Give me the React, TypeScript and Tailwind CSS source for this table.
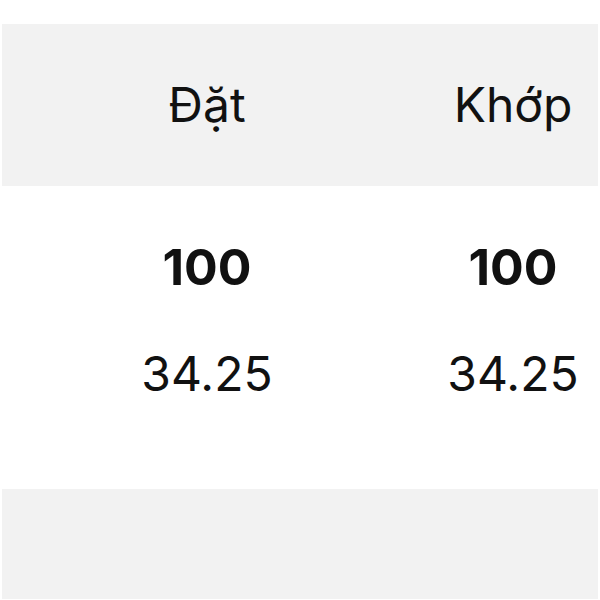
import React from 'react';

/* ---------- Veri ------------------------------------------------- */
const columns = [
  { label: 'Đặt', qty: '100', price: '34.25' },
  { label: 'Khớp', qty: '100', price: '34.25' },
];

/* ---------- Bileşen --------------------------------------------- */
export default function App() {
  return (
    <main
      className="w-[600px] h-[600px] bg-white overflow-hidden text-[#111]"
      style={{ fontFamily: 'Inter, "Noto Sans", sans-serif' }}
    >
      {/* Başlık satırı */}
      <div className="pt-[24px]">
        <div className="mx-[2px] h-[162px] bg-[#f2f2f2] flex items-center">
          <div className="w-[52px] shrink-0" />
          {columns.map(c => (
            <div key={c.label} className="w-[306px] shrink-0 text-center text-[48px] leading-[58px]">
              {c.label}
            </div>
          ))}
        </div>
      </div>

      {/* Değer satırı */}
      <div className="h-[303px] flex pt-[52px]">
        <div className="w-[54px] shrink-0" />
        {columns.map(c => (
          <div key={c.label} className="w-[306px] shrink-0 flex flex-col items-center">
            <span className="text-[50px] font-bold leading-[58px]">{c.qty}</span>
            <span className="mt-[49px] text-[48px] leading-[58px]">{c.price}</span>
          </div>
        ))}
      </div>

      {/* Alt bant */}
      <div className="mx-[2px] h-[110px] bg-[#f2f2f2]" />
    </main>
  );
}
